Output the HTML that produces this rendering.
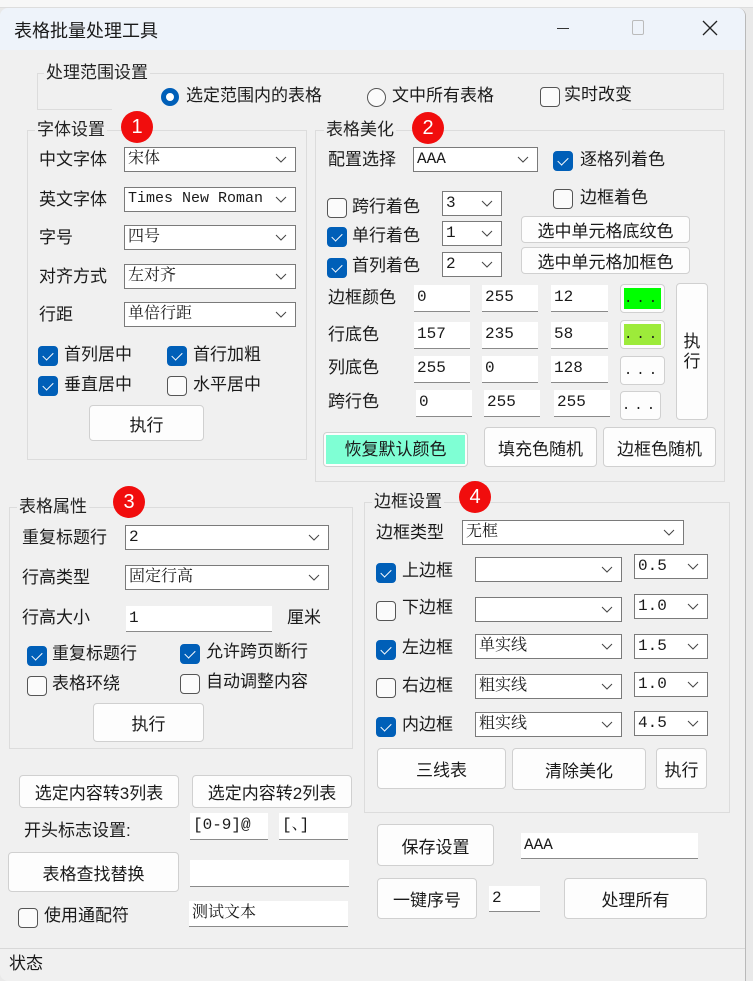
<!DOCTYPE html>
<html><head><meta charset="utf-8"><style>
*{box-sizing:border-box;margin:0;padding:0}
body{width:753px;height:981px;overflow:hidden;background:#e9e9e9;font-family:"Liberation Sans","Noto Sans CJK SC",sans-serif;font-size:17px;color:#1a1a1a;position:relative}
.a{position:absolute;white-space:nowrap}
.win{position:absolute;left:0;top:8px;width:746px;height:973px;background:#f0f0f0;border-radius:8px 8px 0 8px;border-right:1px solid #b9b9b9;overflow:hidden}
.title{position:absolute;left:0;top:0;width:746px;height:42px;background:#eef3fa}
.grp{position:absolute;border:1px solid #dcdcdc}
.lg{position:absolute;background:#f0f0f0;padding:0 2px;font-size:17px;color:#222;line-height:20px}
.lb{position:absolute;line-height:20px;font-size:17px}
.cb{position:absolute;background:#fff;border:1px solid #7a7a7a;font-family:"Liberation Mono","Noto Serif CJK SC",serif;font-size:16px;line-height:22px;padding-left:3px}
.cb svg{position:absolute;right:8px;top:8px}
.in{position:absolute;background:#fff;border-bottom:1px solid #8a8a8a;font-family:"Liberation Mono","Noto Serif CJK SC",serif;font-size:16px;line-height:24px;padding-left:3px}
.bt{position:absolute;background:#fdfdfd;border:1px solid #d0d0d0;border-radius:4px;text-align:center;font-size:17px;display:flex;align-items:center;justify-content:center}
.ck{position:absolute;width:20px;height:20px;border:1px solid #555;border-radius:4px;background:#fbfbfb}
.ck.on{background:#005fb8;border-color:#005fb8}
.ck.on::after{content:"";position:absolute;left:6px;top:3px;width:5px;height:9px;border:solid #fff;border-width:0 1.5px 1.5px 0;transform:rotate(45deg)}
.bd{position:absolute;width:32px;height:32px;border-radius:50%;background:#f10d0d;color:#fff;font-size:20px;text-align:center;line-height:32px}
.dt{letter-spacing:4px;font-family:"Liberation Mono",monospace;font-size:14px}
</style></head><body>
<div class="a" style="left:0;top:0;width:753px;height:8px;background:#f7f7f7;border-bottom:1px solid #ddd"></div>
<div class="win">
<div class="title"></div>
<div class="a" style="left:14px;top:9px;font-size:18px">表格批量处理工具</div>
<div class="a" style="left:557px;top:20px;width:12px;height:1px;background:#333"></div>
<div class="a" style="left:632px;top:12px;width:12px;height:15px;border:1px solid #bbb;border-radius:2px"></div>
<svg class="a" style="left:702px;top:12px" width="16" height="16"><path d="M1 1L15 15M15 1L1 15" stroke="#222" stroke-width="1.3"/></svg>

<div class="grp" style="left:37px;top:65px;width:687px;height:37px"></div>
<div class="lg" style="left:44px;top:55px">处理范围设置</div>
<div class="a" style="left:112px;top:75px;width:510px;height:28px;background:#f0f0f0"></div>
<div class="a" style="left:161px;top:80px;width:18px;height:18px;border-radius:50%;border:5px solid #005fb8;background:#fff"></div>
<div class="lb" style="left:186px;top:78px">选定范围内的表格</div>
<div class="a" style="left:367px;top:80px;width:19px;height:19px;border-radius:50%;border:1px solid #555;background:#fbfbfb"></div>
<div class="lb" style="left:392px;top:78px">文中所有表格</div>
<div class="ck" style="left:540px;top:79px"></div>
<div class="lb" style="left:564px;top:77px">实时改变</div>

<!-- group1 -->
<div class="grp" style="left:27px;top:122px;width:280px;height:330px"></div>
<div class="lg" style="left:35px;top:112px">字体设置</div>
<div class="bd" style="left:121px;top:103px">1</div>
<div class="lb" style="left:39px;top:142px">中文字体</div>
<div class="cb" style="left:124px;top:139px;width:172px;height:25px">宋体<svg width="12" height="8"><path d="M1 1l5 5 5-5" fill="none" stroke="#444"/></svg></div>
<div class="lb" style="left:39px;top:182px">英文字体</div>
<div class="cb" style="left:124px;top:179px;width:172px;height:25px;font-size:15px">Times New Roman<svg width="12" height="8"><path d="M1 1l5 5 5-5" fill="none" stroke="#444"/></svg></div>
<div class="lb" style="left:39px;top:220px">字号</div>
<div class="cb" style="left:124px;top:217px;width:172px;height:25px">四号<svg width="12" height="8"><path d="M1 1l5 5 5-5" fill="none" stroke="#444"/></svg></div>
<div class="lb" style="left:39px;top:259px">对齐方式</div>
<div class="cb" style="left:124px;top:256px;width:172px;height:25px">左对齐<svg width="12" height="8"><path d="M1 1l5 5 5-5" fill="none" stroke="#444"/></svg></div>
<div class="lb" style="left:39px;top:297px">行距</div>
<div class="cb" style="left:124px;top:294px;width:172px;height:25px">单倍行距<svg width="12" height="8"><path d="M1 1l5 5 5-5" fill="none" stroke="#444"/></svg></div>
<div class="ck on" style="left:38px;top:338px"></div><div class="lb" style="left:64px;top:337px">首列居中</div>
<div class="ck on" style="left:167px;top:338px"></div><div class="lb" style="left:193px;top:337px">首行加粗</div>
<div class="ck on" style="left:38px;top:368px"></div><div class="lb" style="left:64px;top:367px">垂直居中</div>
<div class="ck" style="left:167px;top:368px"></div><div class="lb" style="left:193px;top:367px">水平居中</div>
<div class="bt" style="left:89px;top:397px;width:115px;height:36px">执行</div>

<!-- group2 -->
<div class="grp" style="left:315px;top:122px;width:410px;height:352px"></div>
<div class="lg" style="left:324px;top:112px">表格美化</div>
<div class="bd" style="left:412px;top:104px">2</div>
<div class="lb" style="left:328px;top:142px">配置选择</div>
<div class="cb" style="left:413px;top:139px;width:125px;height:25px">AAA<svg width="12" height="8"><path d="M1 1l5 5 5-5" fill="none" stroke="#444"/></svg></div>
<div class="ck on" style="left:553px;top:143px"></div><div class="lb" style="left:580px;top:142px">逐格列着色</div>
<div class="ck" style="left:553px;top:181px"></div><div class="lb" style="left:580px;top:180px">边框着色</div>
<div class="ck" style="left:327px;top:190px"></div><div class="lb" style="left:352px;top:189px">跨行着色</div>
<div class="cb" style="left:442px;top:183px;width:60px;height:25px">3<svg width="12" height="8"><path d="M1 1l5 5 5-5" fill="none" stroke="#444"/></svg></div>
<div class="ck on" style="left:327px;top:219px"></div><div class="lb" style="left:352px;top:218px">单行着色</div>
<div class="cb" style="left:442px;top:213px;width:60px;height:25px">1<svg width="12" height="8"><path d="M1 1l5 5 5-5" fill="none" stroke="#444"/></svg></div>
<div class="ck on" style="left:327px;top:250px"></div><div class="lb" style="left:352px;top:248px">首列着色</div>
<div class="cb" style="left:442px;top:244px;width:60px;height:25px">2<svg width="12" height="8"><path d="M1 1l5 5 5-5" fill="none" stroke="#444"/></svg></div>
<div class="bt" style="left:521px;top:208px;width:169px;height:27px">选中单元格底纹色</div>
<div class="bt" style="left:521px;top:239px;width:169px;height:27px">选中单元格加框色</div>
<div class="lb" style="left:328px;top:280px">边框颜色</div>
<div class="in" style="left:414px;top:277px;width:56px;height:27px">0</div>
<div class="in" style="left:482px;top:277px;width:56px;height:27px">255</div>
<div class="in" style="left:551px;top:277px;width:57px;height:27px">12</div>
<div class="bt" style="left:620px;top:276px;width:45px;height:29px;padding:3px"><div class="dt" style="width:100%;height:100%;background:#00ff00;line-height:22px">...</div></div>
<div class="lb" style="left:328px;top:317px">行底色</div>
<div class="in" style="left:414px;top:314px;width:56px;height:27px">157</div>
<div class="in" style="left:482px;top:314px;width:56px;height:27px">235</div>
<div class="in" style="left:551px;top:314px;width:57px;height:27px">58</div>
<div class="bt" style="left:620px;top:312px;width:45px;height:29px;padding:3px"><div class="dt" style="width:100%;height:100%;background:#9deb3a;line-height:22px">...</div></div>
<div class="lb" style="left:328px;top:350px">列底色</div>
<div class="in" style="left:414px;top:348px;width:56px;height:27px">255</div>
<div class="in" style="left:482px;top:348px;width:56px;height:27px">0</div>
<div class="in" style="left:551px;top:348px;width:57px;height:27px">128</div>
<div class="bt dt" style="left:620px;top:348px;width:45px;height:29px">...</div>
<div class="lb" style="left:328px;top:384px">跨行色</div>
<div class="in" style="left:416px;top:382px;width:56px;height:27px">0</div>
<div class="in" style="left:484px;top:382px;width:56px;height:27px">255</div>
<div class="in" style="left:554px;top:382px;width:56px;height:27px">255</div>
<div class="bt dt" style="left:620px;top:383px;width:41px;height:29px">...</div>
<div class="bt" style="left:676px;top:275px;width:32px;height:137px;line-height:20px;white-space:normal;flex-direction:column">执<br>行</div>
<div class="bt" style="left:323px;top:424px;width:145px;height:35px;padding:2px"><div style="width:100%;height:100%;background:#7fffd4;line-height:29px">恢复默认颜色</div></div>
<div class="bt" style="left:484px;top:419px;width:113px;height:40px">填充色随机</div>
<div class="bt" style="left:603px;top:419px;width:113px;height:40px">边框色随机</div>

<!-- group3 -->
<div class="grp" style="left:9px;top:499px;width:344px;height:242px"></div>
<div class="lg" style="left:17px;top:489px">表格属性</div>
<div class="bd" style="left:113px;top:478px">3</div>
<div class="lb" style="left:22px;top:520px">重复标题行</div>
<div class="cb" style="left:125px;top:517px;width:204px;height:25px">2<svg width="12" height="8"><path d="M1 1l5 5 5-5" fill="none" stroke="#444"/></svg></div>
<div class="lb" style="left:22px;top:560px">行高类型</div>
<div class="cb" style="left:125px;top:557px;width:204px;height:25px">固定行高<svg width="12" height="8"><path d="M1 1l5 5 5-5" fill="none" stroke="#444"/></svg></div>
<div class="lb" style="left:22px;top:600px">行高大小</div>
<div class="in" style="left:126px;top:598px;width:146px;height:26px">1</div>
<div class="lb" style="left:287px;top:600px">厘米</div>
<div class="ck on" style="left:27px;top:638px"></div><div class="lb" style="left:52px;top:636px">重复标题行</div>
<div class="ck on" style="left:180px;top:636px"></div><div class="lb" style="left:206px;top:634px">允许跨页断行</div>
<div class="ck" style="left:27px;top:668px"></div><div class="lb" style="left:52px;top:666px">表格环绕</div>
<div class="ck" style="left:180px;top:666px"></div><div class="lb" style="left:206px;top:664px">自动调整内容</div>
<div class="bt" style="left:93px;top:695px;width:111px;height:39px">执行</div>

<div class="bt" style="left:19px;top:767px;width:160px;height:33px">选定内容转3列表</div>
<div class="bt" style="left:192px;top:767px;width:160px;height:33px">选定内容转2列表</div>
<div class="lb" style="left:24px;top:813px">开头标志设置:</div>
<div class="in" style="left:190px;top:805px;width:78px;height:27px">[0-9]@</div>
<div class="in" style="left:279px;top:805px;width:69px;height:27px">[、]</div>
<div class="bt" style="left:8px;top:844px;width:171px;height:40px">表格查找替换</div>
<div class="in" style="left:190px;top:852px;width:159px;height:27px"></div>
<div class="ck" style="left:18px;top:900px"></div><div class="lb" style="left:44px;top:898px">使用通配符</div>
<div class="in" style="left:189px;top:893px;width:159px;height:26px">测试文本</div>

<!-- group4 -->
<div class="grp" style="left:364px;top:494px;width:366px;height:311px"></div>
<div class="lg" style="left:372px;top:484px">边框设置</div>
<div class="bd" style="left:459px;top:473px">4</div>
<div class="lb" style="left:376px;top:515px">边框类型</div>
<div class="cb" style="left:462px;top:512px;width:222px;height:25px">无框<svg width="12" height="8"><path d="M1 1l5 5 5-5" fill="none" stroke="#444"/></svg></div>
<div class="ck on" style="left:376px;top:555px"></div><div class="lb" style="left:402px;top:553px">上边框</div>
<div class="cb" style="left:475px;top:549px;width:147px;height:25px"><svg width="12" height="8"><path d="M1 1l5 5 5-5" fill="none" stroke="#444"/></svg></div>
<div class="cb" style="left:634px;top:546px;width:74px;height:25px">0.5<svg width="12" height="8"><path d="M1 1l5 5 5-5" fill="none" stroke="#444"/></svg></div>
<div class="ck" style="left:376px;top:593px"></div><div class="lb" style="left:402px;top:590px">下边框</div>
<div class="cb" style="left:475px;top:589px;width:147px;height:25px"><svg width="12" height="8"><path d="M1 1l5 5 5-5" fill="none" stroke="#444"/></svg></div>
<div class="cb" style="left:634px;top:586px;width:74px;height:25px">1.0<svg width="12" height="8"><path d="M1 1l5 5 5-5" fill="none" stroke="#444"/></svg></div>
<div class="ck on" style="left:376px;top:632px"></div><div class="lb" style="left:402px;top:630px">左边框</div>
<div class="cb" style="left:475px;top:626px;width:147px;height:25px">单实线<svg width="12" height="8"><path d="M1 1l5 5 5-5" fill="none" stroke="#444"/></svg></div>
<div class="cb" style="left:634px;top:626px;width:74px;height:25px">1.5<svg width="12" height="8"><path d="M1 1l5 5 5-5" fill="none" stroke="#444"/></svg></div>
<div class="ck" style="left:376px;top:670px"></div><div class="lb" style="left:402px;top:668px">右边框</div>
<div class="cb" style="left:475px;top:666px;width:147px;height:25px">粗实线<svg width="12" height="8"><path d="M1 1l5 5 5-5" fill="none" stroke="#444"/></svg></div>
<div class="cb" style="left:634px;top:664px;width:74px;height:25px">1.0<svg width="12" height="8"><path d="M1 1l5 5 5-5" fill="none" stroke="#444"/></svg></div>
<div class="ck on" style="left:376px;top:709px"></div><div class="lb" style="left:402px;top:707px">内边框</div>
<div class="cb" style="left:475px;top:704px;width:147px;height:25px">粗实线<svg width="12" height="8"><path d="M1 1l5 5 5-5" fill="none" stroke="#444"/></svg></div>
<div class="cb" style="left:634px;top:703px;width:74px;height:25px">4.5<svg width="12" height="8"><path d="M1 1l5 5 5-5" fill="none" stroke="#444"/></svg></div>
<div class="bt" style="left:377px;top:740px;width:129px;height:41px">三线表</div>
<div class="bt" style="left:512px;top:740px;width:134px;height:42px">清除美化</div>
<div class="bt" style="left:656px;top:740px;width:51px;height:41px">执行</div>

<div class="bt" style="left:377px;top:816px;width:117px;height:42px">保存设置</div>
<div class="in" style="left:521px;top:825px;width:177px;height:26px">AAA</div>
<div class="bt" style="left:377px;top:870px;width:100px;height:41px">一键序号</div>
<div class="in" style="left:489px;top:878px;width:51px;height:26px">2</div>
<div class="bt" style="left:564px;top:870px;width:143px;height:41px">处理所有</div>

<div class="a" style="left:0;top:940px;width:746px;height:1px;background:#d8d8d8"></div>
<div class="lb" style="left:9px;top:946px">状态</div>
</div>
</body></html>
